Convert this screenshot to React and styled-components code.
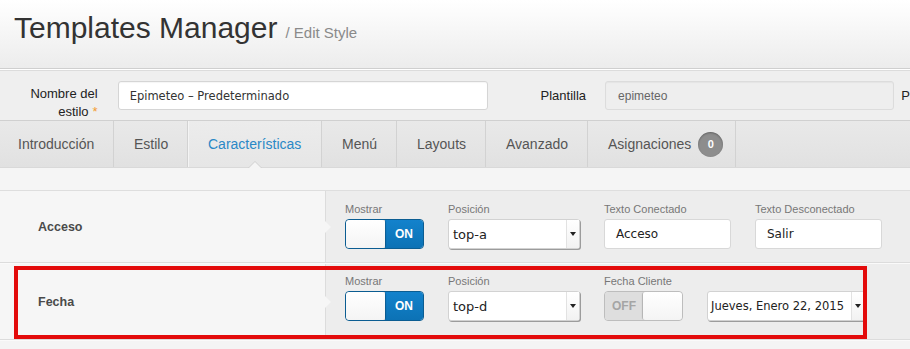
import React from "react";
import styled, { createGlobalStyle } from "styled-components";

const Global = createGlobalStyle`
  html, body { margin: 0; padding: 0; background: #f4f4f4; }
  body { font-family: "Liberation Sans", Arial, sans-serif; }
  * { box-sizing: border-box; }
`;

const Page = styled.div`
  width: 910px;
  height: 349px;
  overflow: hidden;
  position: relative;
  background: #f4f4f4;
`;

const Header = styled.header`
  height: 69px;
  padding: 11px 0 0 14px;
  display: flex;
  align-items: baseline;
  gap: 8px;
  background: linear-gradient(#ffffff, #ececec);
  border-bottom: 1px solid #cfcfcf;
  box-shadow: 0 1px 0 #ffffff;
`;

const Title = styled.h1`
  margin: 0;
  font-size: 30px;
  line-height: 34px;
  font-weight: normal;
  color: #333;
`;

const Sub = styled.span`
  font-size: 15px;
  color: #8a8a8a;
`;

const FormBar = styled.div`
  height: 50px;
  margin-top: 1px;
  display: flex;
  align-items: center;
  background: #efefef;
  border-top: 1px solid #dcdcdc;
  white-space: nowrap;
`;

const FieldLabel = styled.label`
  width: ${(p) => p.$w}px;
  display: flex;
  flex-direction: column;
  align-items: flex-end;
  font-size: 13px;
  line-height: 18px;
  color: #222;
  padding-top: ${(p) => (p.$two ? 14 : 0)}px;
  margin-right: ${(p) => p.$mr}px;
`;

const LabelLine = styled.span`
  display: block;
  white-space: nowrap;
`;

const Star = styled.span`
  color: #f39c32;
  margin-left: 4px;
`;

const BigInput = styled.div`
  width: ${(p) => p.$w}px;
  height: 29px;
  display: flex;
  align-items: center;
  padding-left: ${(p) => p.$pl}px;
  border: 1px solid ${(p) => (p.$disabled ? "#dcdcdc" : "#d5d5d5")};
  border-radius: 3px;
  background: ${(p) => (p.$disabled ? "#eeeeee" : "#ffffff")};
  color: ${(p) => (p.$disabled ? "#666" : "#333")};
  font-family: ${(p) => (p.$disabled ? '"Liberation Sans", Arial, sans-serif' : '"DejaVu Sans", Verdana, sans-serif')};
  font-size: ${(p) => (p.$disabled ? 12 : 11.5)}px;
  box-shadow: inset 0 1px 1px rgba(0,0,0,0.04);
  margin-right: ${(p) => p.$mr}px;
`;

const Tabs = styled.nav`
  height: 48px;
  display: flex;
  background: linear-gradient(#e9e9e9, #e1e1e1);
  border-top: 1px solid #d0d0d0;
  border-bottom: 1px solid #d9d9d9;
`;

const Tab = styled.div`
  position: relative;
  width: ${(p) => p.$w}px;
  padding-left: ${(p) => p.$pl}px;
  display: flex;
  align-items: center;
  gap: 7px;
  font-size: 14px;
  color: ${(p) => (p.$active ? "#2a88c6" : "#555")};
  background: ${(p) => (p.$active ? "linear-gradient(#ececec, #e6e6e6)" : "transparent")};
  border-right: 1px solid #d2d2d2;
  box-shadow: ${(p) => (p.$active ? "inset 1px 0 0 #f4f4f4" : "none")};
`;

const Caret = styled.span`
  position: absolute;
  left: 60px;
  bottom: -1px;
  width: 0;
  height: 0;
  border-left: 7px solid transparent;
  border-right: 7px solid transparent;
  border-bottom: 7px solid #d0d0d0;
  &::after {
    content: "";
    position: absolute;
    left: -6px;
    top: 1px;
    border-left: 6px solid transparent;
    border-right: 6px solid transparent;
    border-bottom: 6px solid #f5f5f5;
  }
`;

const Badge = styled.span`
  width: 25px;
  height: 25px;
  border-radius: 50%;
  background: #8d8d8d;
  color: #fff;
  font-size: 11px;
  font-weight: bold;
  display: flex;
  align-items: center;
  justify-content: center;
  box-shadow: inset 0 1px 2px rgba(0,0,0,0.3);
`;

const Strip = styled.div`
  height: 23px;
  background: #f5f5f5;
  border-bottom: 1px solid #dedede;
`;

const Row = styled.section`
  display: flex;
  height: ${(p) => p.$h}px;
  border-bottom: 1px solid #dcdcdc;
  box-shadow: 0 1px 0 #fafafa;
  margin-bottom: 1px;
`;

const RowLabel = styled.div`
  width: 326px;
  padding-left: 38px;
  display: flex;
  align-items: center;
  font-size: 12.5px;
  font-weight: bold;
  color: #4a4a4a;
  background: #f6f6f6;
  border-right: 1px solid #dcdcdc;
  position: relative;
  &::after {
    content: "";
    position: absolute;
    right: -6px;
    top: 50%;
    margin-top: -6px;
    border-top: 6px solid transparent;
    border-bottom: 6px solid transparent;
    border-left: 6px solid #f6f6f6;
  }
`;

const RowBody = styled.div`
  flex: 1;
  background: #ededed;
  padding: ${(p) => p.$pt}px 0 0 19px;
`;

const Controls = styled.div`
  display: flex;
  align-items: flex-end;
  gap: 24px;
`;

const Group = styled.div`
  display: flex;
  flex-direction: column;
  gap: 3px;
`;

const Small = styled.span`
  font-size: 11px;
  line-height: 13px;
  color: #777;
`;

const Toggle = styled.div`
  width: 79px;
  height: 30px;
  display: flex;
  border-radius: 4px;
  overflow: hidden;
  border: 1px solid ${(p) => (p.$on ? "#0b5d92" : "#bdbdbd")};
  flex-direction: ${(p) => (p.$on ? "row" : "row-reverse")};
`;

const Knob = styled.div`
  width: 39px;
  background: linear-gradient(#ffffff, #f4f4f4);
  border-radius: 3px;
  box-shadow: ${(p) => (p.$on ? "1px 0 1px rgba(0,0,0,0.25)" : "-1px 0 1px rgba(0,0,0,0.2)")};
  z-index: 1;
`;

const ToggleFace = styled.div`
  flex: 1;
  display: flex;
  align-items: center;
  justify-content: center;
  font-size: 12px;
  font-weight: bold;
  color: ${(p) => (p.$on ? "#fff" : "#a5a5a5")};
  background: ${(p) => (p.$on ? "linear-gradient(#1382cc, #0c72b5)" : "#dedede")};
`;

const Select = styled.div`
  width: ${(p) => p.$w}px;
  height: 30px;
  display: flex;
  align-items: center;
  background: #fff;
  border: 1px solid #d2d2d2;
  border-radius: 3px;
  box-shadow: 1px 1px 0 #9c9c9c;
  font-family: "DejaVu Sans", Verdana, sans-serif;
  font-size: ${(p) => p.$fs}px;
  color: #222;
`;

const SelectText = styled.span`
  flex: 1;
  padding-left: ${(p) => p.$pl}px;
  white-space: nowrap;
  overflow: hidden;
`;

const Arrow = styled.span`
  width: 13px;
  height: 100%;
  border-left: 1px solid #e2e2e2;
  display: flex;
  align-items: center;
  justify-content: center;
  background: linear-gradient(#fff, #f2f2f2);
  &::before {
    content: "";
    border-left: 3px solid transparent;
    border-right: 3px solid transparent;
    border-top: 4px solid #222;
  }
`;

const TextInput = styled.div`
  width: 127px;
  height: 30px;
  display: flex;
  align-items: center;
  padding-left: 11px;
  background: #fff;
  border: 1px solid #d8d8d8;
  border-radius: 3px;
  font-family: "DejaVu Sans", Verdana, sans-serif;
  font-size: 12px;
  color: #222;
`;

const Highlight = styled.div`
  position: absolute;
  left: 14px;
  top: 266px;
  width: 853px;
  height: 73px;
  border: 4px solid #e30b0b;
  pointer-events: none;
`;

export default function App() {
  return (
    <Page>
      <Global />
      <Header>
        <Title>Templates Manager</Title>
        <Sub>/ Edit Style</Sub>
      </Header>
      <FormBar>
        <FieldLabel $w={98} $mr={20} $two>
          <LabelLine>Nombre del</LabelLine>
          <LabelLine>
            estilo<Star>*</Star>
          </LabelLine>
        </FieldLabel>
        <BigInput $w={372} $pl={11} $mr={52}>Epimeteo – Predeterminado</BigInput>
        <FieldLabel $w={46} $mr={19}>
          <LabelLine>Plantilla</LabelLine>
        </FieldLabel>
        <BigInput $w={290} $pl={12} $mr={6} $disabled>epimeteo</BigInput>
        <FieldLabel $w={10} $mr={0}>
          <LabelLine>P</LabelLine>
        </FieldLabel>
      </FormBar>
      <Tabs>
        <Tab $w={114} $pl={18}>Introducción</Tab>
        <Tab $w={74} $pl={20}>Estilo</Tab>
        <Tab $w={134} $pl={20} $active>
          Características
          <Caret />
        </Tab>
        <Tab $w={75} $pl={20}>Menú</Tab>
        <Tab $w={89} $pl={20}>Layouts</Tab>
        <Tab $w={102} $pl={20}>Avanzado</Tab>
        <Tab $w={148} $pl={20}>
          Asignaciones <Badge>0</Badge>
        </Tab>
      </Tabs>
      <Strip />
      <Row $h={72}>
        <RowLabel>Acceso</RowLabel>
        <RowBody $pt={12}>
          <Controls>
            <Group>
              <Small>Mostrar</Small>
              <Toggle $on>
                <Knob $on />
                <ToggleFace $on>ON</ToggleFace>
              </Toggle>
            </Group>
            <Group>
              <Small>Posición</Small>
              <Select $w={132} $fs={13}>
                <SelectText $pl={4}>top-a</SelectText>
                <Arrow />
              </Select>
            </Group>
            <Group>
              <Small>Texto Conectado</Small>
              <TextInput>Acceso</TextInput>
            </Group>
            <Group>
              <Small>Texto Desconectado</Small>
              <TextInput>Salir</TextInput>
            </Group>
          </Controls>
        </RowBody>
      </Row>
      <Row $h={76}>
        <RowLabel>Fecha</RowLabel>
        <RowBody $pt={11}>
          <Controls>
            <Group>
              <Small>Mostrar</Small>
              <Toggle $on>
                <Knob $on />
                <ToggleFace $on>ON</ToggleFace>
              </Toggle>
            </Group>
            <Group>
              <Small>Posición</Small>
              <Select $w={132} $fs={13}>
                <SelectText $pl={4}>top-d</SelectText>
                <Arrow />
              </Select>
            </Group>
            <Group>
              <Small>Fecha Cliente</Small>
              <Toggle>
                <Knob />
                <ToggleFace>OFF</ToggleFace>
              </Toggle>
            </Group>
            <Select $w={158} $fs={11.5}>
              <SelectText $pl={3}>Jueves, Enero 22, 2015</SelectText>
              <Arrow />
            </Select>
          </Controls>
        </RowBody>
      </Row>
      <Highlight />
    </Page>
  );
}
